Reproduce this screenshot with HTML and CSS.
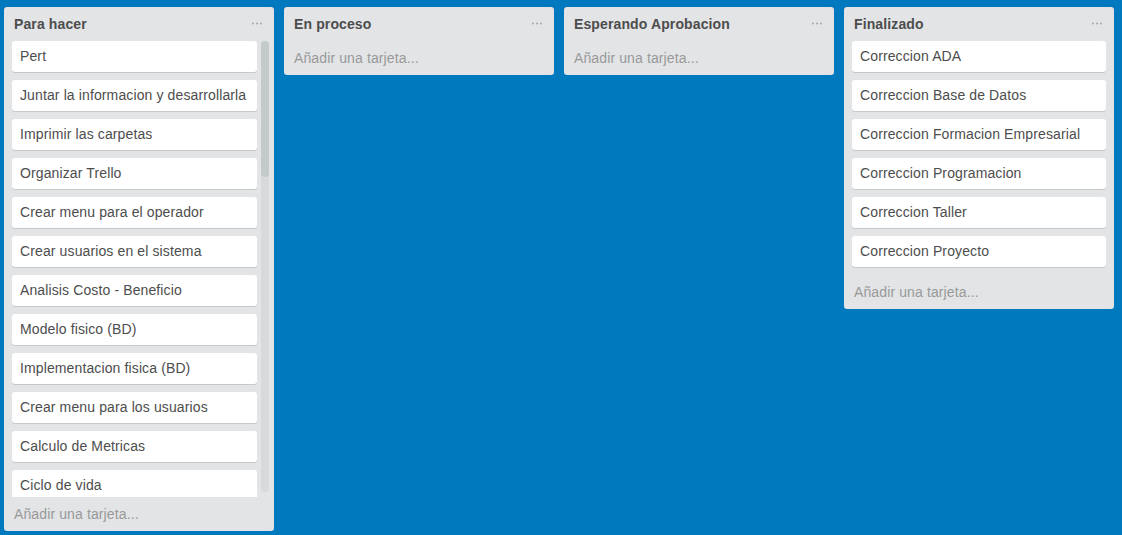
FILE: index.html
```html
<!DOCTYPE html>
<html lang="es">
<head>
<meta charset="utf-8">
<title>Tablero</title>
<link rel="stylesheet" href="styles.css">
</head>
<body>
<div class="board">
  <div class="list">
    <div class="list-header">
      <span class="list-title">Para hacer</span>
      <svg class="dots" width="10" height="3" viewBox="0 0 10 3"><circle cx="1" cy="1.5" r="1"/><circle cx="5" cy="1.5" r="1"/><circle cx="9" cy="1.5" r="1"/></svg>
    </div>
    <div class="cards-wrap">
      <div class="cards cards-scroll">
        <div class="card">Pert</div>
        <div class="card">Juntar la informacion y desarrollarla</div>
        <div class="card">Imprimir las carpetas</div>
        <div class="card">Organizar Trello</div>
        <div class="card">Crear menu para el operador</div>
        <div class="card">Crear usuarios en el sistema</div>
        <div class="card">Analisis Costo - Beneficio</div>
        <div class="card">Modelo fisico (BD)</div>
        <div class="card">Implementacion fisica (BD)</div>
        <div class="card">Crear menu para los usuarios</div>
        <div class="card">Calculo de Metricas</div>
        <div class="card">Ciclo de vida</div>
      </div>
      <div class="scrollbar"><div class="thumb"></div></div>
    </div>
    <div class="add">Añadir una tarjeta...</div>
  </div>

  <div class="list">
    <div class="list-header">
      <span class="list-title">En proceso</span>
      <svg class="dots" width="10" height="3" viewBox="0 0 10 3"><circle cx="1" cy="1.5" r="1"/><circle cx="5" cy="1.5" r="1"/><circle cx="9" cy="1.5" r="1"/></svg>
    </div>
    <div class="add">Añadir una tarjeta...</div>
  </div>

  <div class="list">
    <div class="list-header">
      <span class="list-title">Esperando Aprobacion</span>
      <svg class="dots" width="10" height="3" viewBox="0 0 10 3"><circle cx="1" cy="1.5" r="1"/><circle cx="5" cy="1.5" r="1"/><circle cx="9" cy="1.5" r="1"/></svg>
    </div>
    <div class="add">Añadir una tarjeta...</div>
  </div>

  <div class="list">
    <div class="list-header">
      <span class="list-title">Finalizado</span>
      <svg class="dots" width="10" height="3" viewBox="0 0 10 3"><circle cx="1" cy="1.5" r="1"/><circle cx="5" cy="1.5" r="1"/><circle cx="9" cy="1.5" r="1"/></svg>
    </div>
    <div class="cards cards-plain">
      <div class="card">Correccion ADA</div>
      <div class="card">Correccion Base de Datos</div>
      <div class="card">Correccion Formacion Empresarial</div>
      <div class="card">Correccion Programacion</div>
      <div class="card">Correccion Taller</div>
      <div class="card">Correccion Proyecto</div>
    </div>
    <div class="add">Añadir una tarjeta...</div>
  </div>
</div>
</body>
</html>
```

FILE: styles.css
```css
html, body {
  margin: 0;
  padding: 0;
  height: 100%;
  background: #0079bf;
  font-family: "Liberation Sans", Arial, sans-serif;
}

.board {
  display: flex;
  align-items: flex-start;
  gap: 10px;
  padding: 7px 4px 0 4px;
}

.list {
  width: 270px;
  flex: 0 0 270px;
  background: #e2e4e6;
  border-radius: 3px;
  display: flex;
  flex-direction: column;
}

.list-header {
  display: flex;
  align-items: center;
  justify-content: space-between;
  padding: 8px 12px 8px 10px;
  height: 18px;
}

.list-title {
  font-size: 14px;
  font-weight: bold;
  color: #4d4d4d;
  line-height: 18px;
  letter-spacing: 0.12px;
}

.dots {
  fill: #a5a8aa;
  margin-top: -2px;
}

.cards-wrap {
  display: flex;
  height: 456px;
  overflow: hidden;
  padding-left: 8px;
}

.cards {
  display: flex;
  flex-direction: column;
  gap: 8px;
}

.cards-scroll {
  width: 245px;
  flex: 0 0 245px;
}

.cards-plain {
  flex: none;
  padding: 0 8px 8px 8px;
}

.card {
  background: #fff;
  border-radius: 3px;
  box-shadow: 0 1px 0 #c4c9cc;
  padding: 6px 8px 7px 8px;
  font-size: 14px;
  line-height: 18px;
  letter-spacing: 0.12px;
  color: #4d4d4d;
  white-space: nowrap;
  overflow: hidden;
  flex: 0 0 auto;
}

.scrollbar {
  width: 8px;
  margin-left: 4px;
  height: 451px;
  background: #d6dadc;
  border-radius: 4px;
  display: flex;
  flex-direction: column;
}

.thumb {
  height: 136px;
  background: #c4c9cc;
  border-radius: 4px;
}

.add {
  padding: 8px 10px;
  font-size: 14px;
  line-height: 18px;
  letter-spacing: 0.12px;
  color: #999;
}
```
